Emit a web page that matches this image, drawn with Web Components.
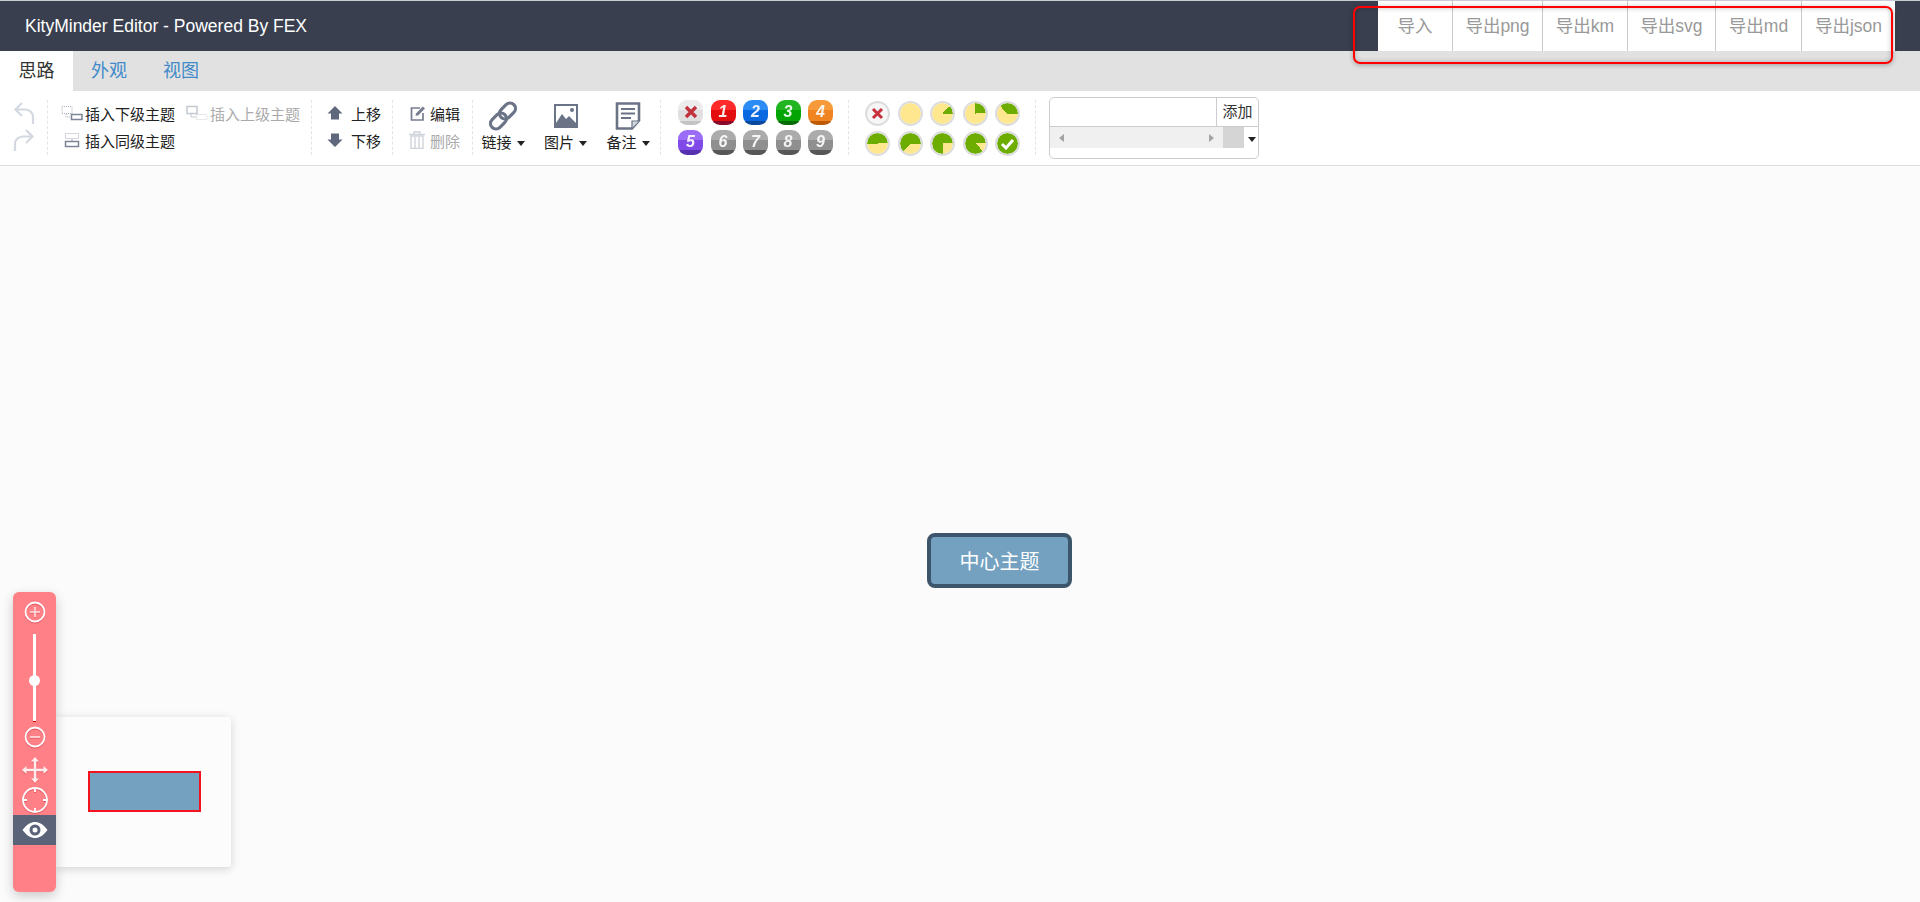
<!DOCTYPE html>
<html lang="zh">
<head>
<meta charset="utf-8">
<title>KityMinder Editor</title>
<style>
  html, body { margin: 0; height: 100%; overflow: hidden; }
  body { font-family: "Liberation Sans", "Noto Sans CJK SC", sans-serif; }
</style>
</head>
<body>
<km-app>
  <km-header slot="header">
    <span slot="title">KityMinder Editor - Powered By FEX</span>
    <km-export first style="width:74px">导入</km-export>
    <km-export style="width:90px">导出png</km-export>
    <km-export style="width:85px">导出km</km-export>
    <km-export style="width:88px">导出svg</km-export>
    <km-export style="width:86px">导出md</km-export>
    <km-export style="width:94px">导出json</km-export>
  </km-header>
  <km-tabs slot="tabs">
    <km-tab active>思路</km-tab>
    <km-tab>外观</km-tab>
    <km-tab>视图</km-tab>
  </km-tabs>
  <km-toolbar slot="toolbar">
    <km-group style="width:48px;padding-left:13px;flex-direction:column;gap:5px;padding-top:1px">
      <km-icon name="undo" size="22"></km-icon>
      <km-icon name="redo" size="22"></km-icon>
    </km-group>
    <km-group style="width:264px;padding-left:13px;flex-direction:column;gap:5px;padding-top:2px">
      <km-row>
        <km-btn icon="child" iconw="22">插入下级主题</km-btn>
        <km-btn icon="parent" iconw="22" disabled style="margin-left:11px">插入上级主题</km-btn>
      </km-row>
      <km-row>
        <km-btn icon="sibling" iconw="22">插入同级主题</km-btn>
      </km-row>
    </km-group>
    <km-group style="width:81px;padding-left:15px;flex-direction:column;gap:5px;padding-top:2px">
      <km-btn icon="up" iconw="22">上移</km-btn>
      <km-btn icon="down" iconw="22">下移</km-btn>
    </km-group>
    <km-group style="width:80px;padding-left:14px;flex-direction:column;gap:5px;padding-top:2px">
      <km-btn icon="edit" iconw="21">编辑</km-btn>
      <km-btn icon="trash" iconw="21" disabled>删除</km-btn>
    </km-group>
    <km-group style="width:188px;padding-left:7px;gap:16.500px">
      <km-big icon="link">链接</km-big>
      <km-big icon="image">图片</km-big>
      <km-big icon="note">备注</km-big>
    </km-group>
    <km-group style="width:188px;padding-left:17px">
      <km-grid>
        <km-priority value="0"></km-priority>
        <km-priority value="1"></km-priority>
        <km-priority value="2"></km-priority>
        <km-priority value="3"></km-priority>
        <km-priority value="4"></km-priority>
        <km-priority value="5"></km-priority>
        <km-priority value="6"></km-priority>
        <km-priority value="7"></km-priority>
        <km-priority value="8"></km-priority>
        <km-priority value="9"></km-priority>
      </km-grid>
    </km-group>
    <km-group style="width:187px;padding-left:16px;padding-top:1px">
      <km-grid>
        <km-progress value="x"></km-progress>
        <km-progress start="0" sweep="0"></km-progress>
        <km-progress start="45" sweep="45"></km-progress>
        <km-progress start="0" sweep="90"></km-progress>
        <km-progress start="-45" sweep="135"></km-progress>
        <km-progress start="-90" sweep="180"></km-progress>
        <km-progress start="-135" sweep="225"></km-progress>
        <km-progress start="180" sweep="270"></km-progress>
        <km-progress start="135" sweep="315"></km-progress>
        <km-progress value="done"></km-progress>
      </km-grid>
    </km-group>
    <km-tagbox></km-tagbox>
  </km-toolbar>
  <km-canvas slot="canvas">
    <km-node>中心主题</km-node>
    <km-minimap></km-minimap>
    <km-zoompan></km-zoompan>
  </km-canvas>
  <km-mark slot="overlay"></km-mark>
</km-app>

<script>
// icon bodies, all drawn on their own viewBox
const ICONS = {
  undo: [22, 24, '<path d="M9 2 2.500 8.500 9 15M3 8.500h9c5 0 8 3.500 8 7.500v7" fill="none" stroke="#d4d8e1" stroke-width="2.200"/>'],
  redo: [22, 24, '<path d="M13 2l6.500 6.500L13 15M19 8.500h-9c-5 0-8 3.500-8 7.500v7" fill="none" stroke="#d4d8e1" stroke-width="2.200"/>'],
  child: [22, 16, '<rect x="1" y="1.500" width="10" height="7" fill="none" stroke="#a9afbb" stroke-dasharray="1 1"/><path d="M5 9v3h5" fill="none" stroke="#a9afbb" stroke-dasharray="1 1"/><rect x="10.500" y="9.500" width="10.500" height="5" fill="#fff" stroke="#7d8497" stroke-width="1.500"/>'],
  parent: [22, 16, '<rect x="1" y="1.500" width="10" height="7" fill="none" stroke="#c4c8d0" stroke-width="1.500"/><path d="M5 9v3h5" fill="none" stroke="#c4c8d0"/><rect x="10.500" y="9.500" width="10.500" height="5" fill="none" stroke="#cfd2d8" stroke-dasharray="1 1"/>'],
  sibling: [22, 16, '<rect x="4.500" y="1.500" width="13" height="5" fill="none" stroke="#a9afbb" stroke-dasharray="1 1"/><path d="M11 7v2" stroke="#a9afbb"/><rect x="4.500" y="9.500" width="13" height="5" fill="#fff" stroke="#7d8497" stroke-width="1.500"/>'],
  up: [22, 16, '<path d="M8 1 15.500 8.500h-3.500v6H4v-6H.5z" fill="#5f687c"/>'],
  down: [22, 16, '<path d="M8 15 15.500 7.500h-3.500v-6H4v6H.5z" fill="#5f687c"/>'],
  edit: [21, 16, '<g transform="translate(3 0)"><path d="M10 3H1.500v12H13V8" fill="none" stroke="#767d90" stroke-width="1.700"/><path d="M5.500 11l.7-2.800L12.800 1.400l2.200 2.200-6.600 6.700z" fill="#767d90"/></g>'],
  trash: [21, 18, '<g transform="translate(2 0)"><path d="M0 3.500h16M5 3V1h6v2" fill="none" stroke="#cfd3db" stroke-width="1.400"/><path d="M2 5h12v12.500H2z" fill="none" stroke="#cfd3db" stroke-width="1.400"/><path d="M6 6v11M10 6v11" stroke="#cfd3db" stroke-width="1.400"/></g>'],
  link: [30, 30, '<g fill="none" stroke="#6b7386" stroke-width="3.200"><rect x="14" y="1" width="11" height="18" rx="5.500" transform="rotate(45 19.500 10)"/><rect x="5" y="11" width="11" height="18" rx="5.500" transform="rotate(45 10.500 20)"/></g>'],
  image: [26, 26, '<rect x="1" y="1" width="24" height="24" fill="#6b7386"/><rect x="3" y="3" width="20" height="17" fill="#fff"/><path d="M3 20l6-9 4 5 3-3 7 7z" fill="#6b7386"/><circle cx="19" cy="7" r="2" fill="#6b7386"/>'],
  note: [26, 28, '<path d="M2 1.500h22v17l-7 8H2z" fill="#fff" stroke="#6b7386" stroke-width="2.600"/><path d="M17 26v-7h7" fill="#d5d8df" stroke="#6b7386" stroke-width="1.200"/><path d="M6 7h14M6 11.500h14M6 16h10" stroke="#6b7386" stroke-width="2"/>']
};

// shorthand for a shadow element that is only a style and some markup
function component(tag, css, html, init) {
  customElements.define(tag, class extends HTMLElement {
    connectedCallback() {
      if (this.shadowRoot) return;
      this.attachShadow({ mode: 'open' });
      const body = typeof html === 'function' ? html(this) : html;
      this.shadowRoot.innerHTML = '<style>' + css + '</style>' + body;
      if (init) init(this);
    }
  });
}

component('km-app', `
  :host { display: flex; flex-direction: column; height: 902px; position: relative; overflow: hidden; }
  ::slotted(km-canvas) { flex: 1; }
`, `<slot name="header"></slot><slot name="tabs"></slot><slot name="toolbar"></slot><slot name="canvas"></slot><slot name="overlay"></slot>`);

component('km-header', `
  :host { display: flex; height: 50px; border-top: 1px solid #c9ccd2; background: #393f4f; justify-content: space-between; }
  .title { padding-left: 25px; color: #fff; font-size: 17.500px; line-height: 51px; }
  .nav { display: flex; margin-right: 25px; background: #fff; }
`, `<div class="title"><slot name="title"></slot></div><div class="nav"><slot></slot></div>`);

component('km-export', `
  :host { display: block; box-sizing: border-box; border-left: 1px solid #c8c8c8; color: #999; font-size: 17.500px; line-height: 50px; text-align: center; }
  :host([first]) { border-left: 0; }
`, `<slot></slot>`);

component('km-tabs', `
  :host { display: flex; height: 40px; background: #e1e1e1; }
`, `<slot></slot>`);

component('km-tab', `
  :host { display: block; width: 72px; box-sizing: border-box; text-align: center; color: #428bca; font-size: 18px; line-height: 40px; }
  :host([active]) { width: 73px; background: #fff; color: #333; }
`, `<slot></slot>`);

component('km-toolbar', `
  :host { display: flex; height: 74px; box-sizing: content-box; background: #fff; border-bottom: 1px solid #dcdcdc; }
`, `<slot></slot>`);

component('km-group', `
  :host { display: flex; box-sizing: border-box; height: 55px; margin: 9px 0 0 0; border-right: 1px dashed #e4e4e4; flex: none; }
`, `<slot></slot>`);

component('km-row', `:host { display: flex; }`, `<slot></slot>`);

component('km-icon', `
  :host { display: block; line-height: 0; height: 22px; }
  svg { display: block; }
`, el => {
  const [w, h, body] = ICONS[el.getAttribute('name')];
  return `<svg width="${w}" height="${h}" viewBox="0 0 ${w} ${h}">${body}</svg>`;
});

component('km-btn', `
  :host { display: flex; align-items: center; height: 22px; color: #222; font-size: 15px; white-space: nowrap; }
  :host([disabled]) { color: #aaa; }
  .i { display: flex; justify-content: center; flex: none; }
`, el => {
  const [w, h, body] = ICONS[el.getAttribute('icon')];
  const iw = el.getAttribute('iconw');
  return `<span class="i" style="width:${iw}px;margin-right:2px"><svg width="${w}" height="${h}" viewBox="0 0 ${w} ${h}">${body}</svg></span><slot></slot>`;
});

component('km-big', `
  :host { display: flex; flex-direction: column; align-items: center; width: 46px; color: #222; font-size: 15px; white-space: nowrap; }
  .i { height: 32px; display: flex; align-items: center; }
  .l { display: flex; align-items: center; gap: 5px; line-height: 22px; }
  .c { width: 0; height: 0; border: 4.500px solid transparent; border-top: 5px solid #222; border-bottom: 0; }
`, el => {
  const [w, h, body] = ICONS[el.getAttribute('icon')];
  return `<div class="i"><svg width="${w}" height="${h}" viewBox="0 0 ${w} ${h}">${body}</svg></div><div class="l"><slot></slot><span class="c"></span></div>`;
});

component('km-grid', `
  :host { display: grid; grid-template-columns: repeat(5, 25px); column-gap: 7.500px; row-gap: 5px; align-content: start; }
`, `<slot></slot>`);

const PRIORITY = {
  1: ['#ff2a2a', '#e30d0d', '#8a0a2a'],
  2: ['#2b8cf5', '#0a68e0', '#0b4a9a'],
  3: ['#22b522', '#04a404', '#066b06'],
  4: ['#f79a3a', '#ef8420', '#bd5a06'],
  5: ['#9b6cf5', '#7f4ae8', '#5530b0'],
  6: ['#ababab', '#8f8f8f', '#575757'],
  7: ['#ababab', '#8f8f8f', '#575757'],
  8: ['#ababab', '#8f8f8f', '#575757'],
  9: ['#ababab', '#8f8f8f', '#575757'],
  0: ['#ececec', '#e0e0e0', '#c4c4c4']
};
component('km-priority', `
  :host { display: flex; align-items: center; justify-content: center; width: 25px; height: 25px; border-radius: 9px; color: #fff; font: italic bold 16px/22px "Liberation Sans", sans-serif; }
  span { margin-top: -2px; opacity: .9; }
  svg { margin-top: -1px; }
`, el => {
  const v = el.getAttribute('value');
  const [a, b, c] = PRIORITY[v];
  el.style.background = `linear-gradient(${a} 0 40%, ${b} 40% 82%, ${c} 82%)`;
  if (v === '0') return '<svg width="14" height="14" viewBox="0 0 14 14"><path d="M2 2l10 10M12 2 2 12" stroke="#c0323c" stroke-width="3.400"/></svg>';
  return `<span>${v}</span>`;
});

component('km-progress', `
  :host { width: 25px; height: 25px; box-sizing: border-box; border-radius: 50%; border: 2.500px solid #dcdcdc; display: flex; align-items: center; justify-content: center; }
`, el => {
  const v = el.getAttribute('value');
  if (v === 'x') {
    el.style.background = '#f6f6f6';
    return '<svg width="13" height="13" viewBox="0 0 13 13"><path d="M2 2l9 9M11 2l-9 9" stroke="#c8303c" stroke-width="3"/></svg>';
  }
  if (v === 'done') {
    el.style.background = '#6cad00';
    el.style.backgroundClip = 'padding-box';
    return '<svg width="15" height="12" viewBox="0 0 15 12"><path d="M2 6l4 4 7-8" fill="none" stroke="#fff" stroke-width="3"/></svg>';
  }
  el.style.background = `conic-gradient(from ${el.getAttribute('start')}deg, #6cad00 0 ${el.getAttribute('sweep')}deg, #ffe78f 0)`;
  el.style.backgroundClip = 'padding-box';
  return '';
});

component('km-tagbox', `
  :host { display: block; box-sizing: border-box; width: 210px; height: 62px; margin: 6px 0 0 13px; border: 1px solid #ccc; border-radius: 5px; flex: none; font-size: 15px; color: #333; }
  .top { display: flex; height: 28px; border-bottom: 1px solid #ccc; }
  .input { flex: 1; }
  .add { width: 41px; border-left: 1px solid #ccc; text-align: center; line-height: 28px; }
  .sel { display: flex; height: 21px; }
  .bar { display: flex; flex: 1; align-items: center; justify-content: space-between; padding: 0 9px; background: #f0f0f0; }
  .thumb { width: 21px; background: #d5d5d5; }
  .drop { width: 14px; display: flex; align-items: center; justify-content: center; }
  .drop i { border: 4.500px solid transparent; border-top: 5px solid #222; border-bottom: 0; margin: 3px 0 0 1px; }
  .l { border: 4.500px solid transparent; border-right: 5px solid #a3a3a3; border-left: 0; }
  .r { border: 4.500px solid transparent; border-left: 5px solid #a3a3a3; border-right: 0; }
`, `<div class="top"><div class="input"></div><div class="add">添加</div></div>
    <div class="sel"><div class="bar"><span class="l"></span><span class="r"></span></div><div class="thumb"></div><div class="drop"><i></i></div></div>`);

component('km-canvas', `
  :host { display: block; position: relative; background: #fbfbfb; }
`, `<slot></slot>`);

component('km-node', `
  :host { position: absolute; left: 927px; top: 367px; width: 145px; height: 55px; box-sizing: border-box; border: 4px solid #3d556b; border-radius: 8px; background: #73a1bf; color: #fff; font-size: 20px; display: flex; align-items: center; justify-content: center; }
`, `<slot></slot>`);

component('km-minimap', `
  :host { position: absolute; left: 56px; top: 551px; width: 175px; height: 150px; box-sizing: border-box; padding-top: 54px; padding-left: 32px; background: #fcfcfc; border-radius: 0 3px 3px 0; box-shadow: 0 2px 10px rgba(0,0,0,.16); }
  div { width: 113px; height: 41px; box-sizing: border-box; background: #73a1bf; border: 2px solid #f3121e; }
`, `<div></div>`);

component('km-zoompan', `
  :host { position: absolute; left: 13px; top: 426px; width: 43px; height: 300px; background: #ff8086; border-radius: 6px; box-shadow: 0 4px 12px rgba(0,0,0,.2); display: flex; flex-direction: column; align-items: center; }
  svg { display: block; flex: none; filter: drop-shadow(0 1px 0 rgba(190,40,50,.45)); }
  .a { margin-top: 8px; }
  .track { position: relative; flex: none; width: 3px; height: 88px; margin-top: 10px; background: #fff; border-bottom: 1px solid #d00; box-sizing: border-box; }
  .knob { position: absolute; left: -4px; top: 41px; width: 11px; height: 11px; border-radius: 50%; background: #fff; }
  .eye { align-self: stretch; height: 30px; background: #5a6378; margin-top: 1px; display: flex; align-items: center; justify-content: center; }
  .eye svg { filter: none; }
`, `
  <svg class="a" width="24" height="24" viewBox="0 0 24 24" fill="none" stroke="#fff"><circle cx="12" cy="12" r="9.500" stroke-width="1.800"/><path d="M7 12h10M12 7v10" stroke-width="1.600" opacity=".8"/></svg>
  <div class="track"><div class="knob"></div></div>
  <svg style="margin-top:3px" width="24" height="24" viewBox="0 0 24 24" fill="none" stroke="#fff"><circle cx="12" cy="12" r="9.500" stroke-width="1.800"/><path d="M7 12h10" stroke-width="1.600" opacity=".8"/></svg>
  <svg style="margin-top:8px;opacity:.85" width="26" height="26" viewBox="0 0 26 26" fill="#fff"><path d="M13 0l4 4.500h-2.800v7.300h7.300V9l4.500 4-4.500 4v-2.800h-7.300v7.300H17L13 26l-4-4.500h2.800v-7.300H4.500V17L0 13l4.500-4v2.800h7.300V4.500H9z"/></svg>
  <svg style="margin-top:3px" width="28" height="28" viewBox="0 0 28 28" fill="none" stroke="#fff" stroke-width="1.800"><circle cx="14" cy="14" r="12"/><path d="M14 2v4M14 22v4M2 14h4M22 14h4"/></svg>
  <div class="eye"><svg width="26" height="18" viewBox="0 0 26 18"><path d="M0.500 9C5 3 9 1 13 1s8 2 12.500 8C21 15 17 17 13 17S5 15 .5 9z" fill="#fff"/><circle cx="13" cy="9" r="5.500" fill="#5a6378"/><circle cx="13" cy="9" r="2.500" fill="#fff"/></svg></div>
`);

component('km-mark', `
  :host { position: absolute; left: 1353px; top: 6px; width: 540px; height: 58px; box-sizing: border-box; border: 2px solid #f00; border-radius: 7px; box-shadow: 0 1px 5px rgba(0,0,0,.3), inset 0 0 5px rgba(0,0,0,.25); pointer-events: none; }
`, ``);
</script>
</body>
</html>
